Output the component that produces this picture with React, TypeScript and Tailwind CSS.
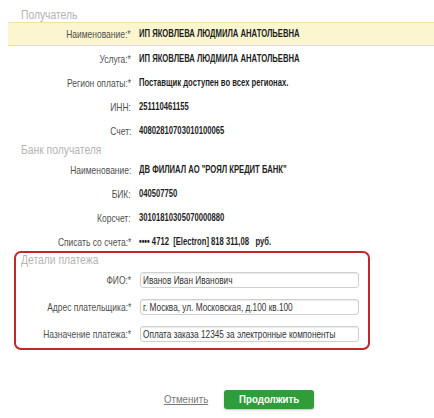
const FONT = 'font-["Liberation_Sans",Arial,sans-serif]';

// the reference text is squeezed horizontally, so spans get a scale-x
const Row = ({ label, value, className = 'h-6' }: { label: string; value: string; className?: string }) => (
  <div className={`flex items-center ${className}`}>
    <div className="w-[123px] shrink-0 text-right text-[11px] text-[#505050]">
      <span className="inline-block origin-right scale-x-[0.77] whitespace-nowrap">{label}</span>
    </div>
    <div className="ml-2 whitespace-nowrap text-[10.5px] font-bold text-[#1e1e1e]">
      <span className="inline-block origin-left scale-x-[0.73] whitespace-pre">{value}</span>
    </div>
  </div>
);

const Field = ({ label, value, className = '' }: { label: string; value: string; className?: string }) => (
  <div className={`flex items-center ${className}`}>
    <div className="w-[115px] shrink-0 text-right text-[11px] text-[#505050]">
      <span className="inline-block origin-right scale-x-[0.77] whitespace-nowrap">{label}</span>
    </div>
    <div className="ml-[9px] flex h-4 w-[219px] items-center overflow-hidden rounded-[3px] border border-[#cfcfcf] bg-white pl-[2px] text-[11px] text-[#333] shadow-[inset_0_1px_1px_rgba(0,0,0,0.08)]">
      <span className="inline-block origin-left scale-x-[0.75] whitespace-nowrap">{value}</span>
    </div>
  </div>
);

const Heading = ({ children, className = '' }: { children: string; className?: string }) => (
  <div className={`h-[14px] text-[12px] leading-[14px] text-[#b4b4b4] ${className}`}>
    <span className="inline-block origin-left scale-x-[0.86] whitespace-nowrap">{children}</span>
  </div>
);

export default function App() {
  return (
    <div className={`relative h-[418px] w-[434px] overflow-hidden bg-white pt-2 ${FONT}`}>
      <div className="pl-2">
        <Heading className="pl-[13px]">Получатель</Heading>
        <Row
          label="Наименование:*"
          value="ИП ЯКОВЛЕВА ЛЮДМИЛА АНАТОЛЬЕВНА"
          className="h-6 border-y border-[#ece39c] bg-[#fbf6cf]"
        />
        <div className="mt-px">
          <Row label="Услуга:*" value="ИП ЯКОВЛЕВА ЛЮДМИЛА АНАТОЛЬЕВНА" />
          <Row label="Регион оплаты:*" value="Поставщик доступен во всех регионах." />
          <Row label="ИНН:" value="251110461155" />
          <Row label="Счет:" value="40802810703010100065" />
        </div>
        <Heading className="pl-[13px]">Банк получателя</Heading>
        <div className="mt-px">
          <Row label="Наименование:" value='ДВ ФИЛИАЛ АО "РОЯЛ КРЕДИТ БАНК"' />
          <Row label="БИК:" value="040507750" />
          <Row label="Корсчет:" value="30101810305070000880" />
          <Row label="Списать со счета:*" value="•••• 4712  [Electron] 818 311,08   руб." className="h-[21px] pt-[3px]" />
        </div>
      </div>

      <div className="ml-[14px] h-[99px] w-[356px] rounded-[7px] border-2 border-[#c1272d]">
        <Heading className="pl-[5px]">Детали платежа</Heading>
        <Field label="ФИО:*" value="Иванов Иван Иванович" className="mt-[5px]" />
        <Field label="Адрес плательщика:*" value="г. Москва, ул. Московская, д.100 кв.100" className="mt-[10px]" />
        <Field label="Назначение платежа:*" value="Оплата заказа 12345 за электронные компоненты" className="mt-[11px]" />
      </div>

      <div className="mt-[40px] flex items-center pl-[164px]">
        <a className="text-[11px] text-[#777]">
          <span className="inline-block origin-left scale-x-[0.88] underline">Отменить</span>
        </a>
        <button className="ml-auto mr-[120px] flex h-[19px] w-[90px] items-center justify-center rounded-[3px] bg-[#2f9d3a] text-[11px] font-bold text-white shadow-[0_1px_2px_rgba(0,0,0,0.25)]">
          <span className="inline-block scale-x-[0.88] whitespace-nowrap">Продолжить</span>
        </button>
      </div>
    </div>
  );
}
